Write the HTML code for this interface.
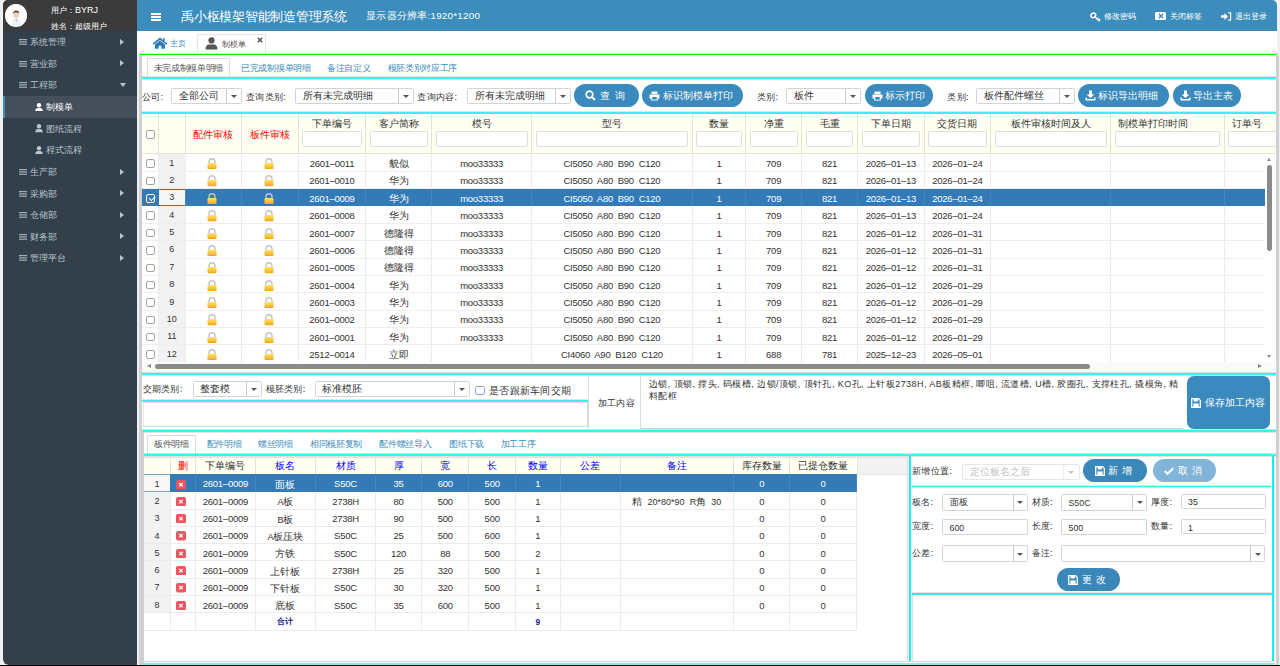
<!DOCTYPE html>
<html><head><meta charset="utf-8">
<style>
*{box-sizing:border-box}
html,body{margin:0;padding:0}
body{width:1280px;height:666px;overflow:hidden;position:relative;background:#f0f0f0;font-family:"Liberation Sans",sans-serif;color:#333}
.a{position:absolute}
#sb{left:2.5px;top:0;width:134px;height:665px;background:#333f4b;border-radius:5px 0 0 6px;overflow:hidden}
#user{left:0;top:0;width:134px;height:31px;background:#3b3b3b}
.av{left:2px;top:4.2px;width:22.4px;height:22.4px;border-radius:50%;background:#fff;overflow:hidden}
.ut{color:#fff;font-size:8px;left:48.5px;white-space:nowrap}
.mi{left:0;width:134px;height:21.6px;color:#b8c7ce;font-size:9.1px;line-height:21.6px;white-space:nowrap}
.mi .ic{position:absolute;left:16.8px;top:8px}
.mi .tx{position:absolute;left:27.5px;top:1px}
.mi .ar{position:absolute;left:117.5px;top:7.6px;width:0;height:0;border-left:4px solid #b8c7ce;border-top:3.5px solid transparent;border-bottom:3.5px solid transparent}
.mi .ad{position:absolute;left:117px;top:9px;width:0;height:0;border-top:4px solid #b8c7ce;border-left:3.5px solid transparent;border-right:3.5px solid transparent}
.sub .tx{left:43px}
.sub .pi{position:absolute;left:32.5px;top:6.6px}
#hd{left:137px;top:0;width:1140px;height:31px;background:#3c8dbc;border-radius:0 5px 0 0}
#tabs{left:137px;top:31px;width:1140px;height:23px;background:#fff}
#main{left:139.5px;top:53px;width:1138px;height:612px;background:#fff}
.hl{top:11px;font-size:8px;color:#fff;white-space:nowrap}

.lb{position:absolute;font-size:9.2px;letter-spacing:0.3px;color:#333;white-space:nowrap}
.sel{position:absolute;border:1px solid #d4d4d4;border-radius:1.5px;background:#fff;font-size:9.6px;color:#333;white-space:nowrap;overflow:hidden}
.sel .t{position:absolute;left:7px;top:50%;transform:translateY(-50%)}
.sel .dv{position:absolute;top:0;bottom:0;border-left:1px solid #ccc}
.sel .cr{position:absolute;top:50%;margin-top:-1px;width:0;height:0;border-top:3.5px solid #555;border-left:3.5px solid transparent;border-right:3.5px solid transparent}
.btn{position:absolute;background:#3a8abd;border-radius:12px;color:#fff;font-size:9.8px;white-space:nowrap}
.btn .t{position:absolute;top:50%;margin-top:0.8px;transform:translateY(-50%)}
.btn svg{position:absolute}
.cy{position:absolute;background:#3cf0f0;box-shadow:0 -0.8px 0 #e2dada,0 0.8px 0 #e2dada}
.st{position:absolute;top:7px;font-size:9px;letter-spacing:-0.3px;color:#3c8dbc;white-space:nowrap}

.th{text-align:center;font-size:10.2px;color:#333;white-space:nowrap}
.td{text-align:center;font-size:10.2px;color:#333;white-space:nowrap}
.td.tdw{color:#fff}
.rn{text-align:center;font-size:9px;color:#333}
.cb{width:9px;height:8.5px;border:1px solid #a8a29a;border-radius:2px;background:#fff}
.cb.ck{border-color:#fff;background:transparent}
.cb.ck::after{content:"";position:absolute;left:1.5px;top:0.5px;width:4.5px;height:2.5px;border-left:1.3px solid #fff;border-bottom:1.3px solid #fff;transform:rotate(-45deg)}
.mono{font-family:"Liberation Mono",monospace}
</style></head><body>
<div class="a" style="left:0;top:665px;width:1280px;height:1px;background:#000"></div>

<div id="sb" class="a">
  <div id="user" class="a">
    <div class="a av"><svg width="22.4" height="22.4" viewBox="0 0 22 22"><path d="M6.5 21 C6.5 15.5 8.5 14.5 11 14.5 C13.5 14.5 15.5 15.5 15.5 21Z" fill="#eef2f4"/><path d="M10.2 15 L11 18 L11.8 15Z" fill="#6fb6d6"/><ellipse cx="11" cy="10.6" rx="2.9" ry="3.4" fill="#f3d2b6"/><path d="M8 9.8 C7.8 7 9.2 6.3 11 6.3 C12.8 6.3 14.2 7 14 9.8 C13.4 8.6 12.4 8.3 11 8.4 C9.6 8.3 8.6 8.6 8 9.8Z" fill="#6b4a32"/></svg></div>
    <div class="a ut" style="top:5px">用户：<span style="font-size:9px">BYRJ</span></div>
    <div class="a ut" style="top:20.5px">姓名：超级用户</div>
  </div>
  <div class="a mi" style="top:31px"><svg class="ic" width="8" height="6" viewBox="0 0 8 6"><rect x="0" y="0" width="8" height="1.2" fill="#a3b0b8"/><rect x="0" y="2.3" width="8" height="1.2" fill="#a3b0b8"/><rect x="0" y="4.6" width="8" height="1.2" fill="#a3b0b8"/></svg><span class="tx">系统管理</span><span class="ar"></span></div>
  <div class="a mi" style="top:52.6px"><svg class="ic" width="8" height="6" viewBox="0 0 8 6"><rect x="0" y="0" width="8" height="1.2" fill="#a3b0b8"/><rect x="0" y="2.3" width="8" height="1.2" fill="#a3b0b8"/><rect x="0" y="4.6" width="8" height="1.2" fill="#a3b0b8"/></svg><span class="tx">营业部</span><span class="ar"></span></div>
  <div class="a mi" style="top:74.2px"><svg class="ic" width="8" height="6" viewBox="0 0 8 6"><rect x="0" y="0" width="8" height="1.2" fill="#a3b0b8"/><rect x="0" y="2.3" width="8" height="1.2" fill="#a3b0b8"/><rect x="0" y="4.6" width="8" height="1.2" fill="#a3b0b8"/></svg><span class="tx">工程部</span><span class="ad"></span></div>
  <div class="a mi sub" style="top:96.3px;height:22px;background:#444f5b;color:#fff;border-left:2.5px solid #3c8dbc"><svg class="pi" style="left:30.5px" width="8" height="8.5" viewBox="0 0 8 8.5"><circle cx="4" cy="2.3" r="2.2" fill="#fff"/><path d="M0.2 8.3 C0.2 5.6 1.6 4.9 2.8 4.9 H5.2 C6.4 4.9 7.8 5.6 7.8 8.3Z" fill="#fff"/></svg><span class="tx" style="left:41px">制模单</span></div>
  <div class="a mi sub" style="top:117.8px"><svg class="pi" width="8" height="8.5" viewBox="0 0 8 8.5"><circle cx="4" cy="2.3" r="2.2" fill="#b8c7ce"/><path d="M0.2 8.3 C0.2 5.6 1.6 4.9 2.8 4.9 H5.2 C6.4 4.9 7.8 5.6 7.8 8.3Z" fill="#b8c7ce"/></svg><span class="tx">图纸流程</span></div>
  <div class="a mi sub" style="top:139.4px"><svg class="pi" width="8" height="8.5" viewBox="0 0 8 8.5"><circle cx="4" cy="2.3" r="2.2" fill="#b8c7ce"/><path d="M0.2 8.3 C0.2 5.6 1.6 4.9 2.8 4.9 H5.2 C6.4 4.9 7.8 5.6 7.8 8.3Z" fill="#b8c7ce"/></svg><span class="tx">程式流程</span></div>
  <div class="a mi" style="top:161px"><svg class="ic" width="8" height="6" viewBox="0 0 8 6"><rect x="0" y="0" width="8" height="1.2" fill="#a3b0b8"/><rect x="0" y="2.3" width="8" height="1.2" fill="#a3b0b8"/><rect x="0" y="4.6" width="8" height="1.2" fill="#a3b0b8"/></svg><span class="tx">生产部</span><span class="ar"></span></div>
  <div class="a mi" style="top:182.6px"><svg class="ic" width="8" height="6" viewBox="0 0 8 6"><rect x="0" y="0" width="8" height="1.2" fill="#a3b0b8"/><rect x="0" y="2.3" width="8" height="1.2" fill="#a3b0b8"/><rect x="0" y="4.6" width="8" height="1.2" fill="#a3b0b8"/></svg><span class="tx">采购部</span><span class="ar"></span></div>
  <div class="a mi" style="top:204.2px"><svg class="ic" width="8" height="6" viewBox="0 0 8 6"><rect x="0" y="0" width="8" height="1.2" fill="#a3b0b8"/><rect x="0" y="2.3" width="8" height="1.2" fill="#a3b0b8"/><rect x="0" y="4.6" width="8" height="1.2" fill="#a3b0b8"/></svg><span class="tx">仓储部</span><span class="ar"></span></div>
  <div class="a mi" style="top:225.8px"><svg class="ic" width="8" height="6" viewBox="0 0 8 6"><rect x="0" y="0" width="8" height="1.2" fill="#a3b0b8"/><rect x="0" y="2.3" width="8" height="1.2" fill="#a3b0b8"/><rect x="0" y="4.6" width="8" height="1.2" fill="#a3b0b8"/></svg><span class="tx">财务部</span><span class="ar"></span></div>
  <div class="a mi" style="top:247.4px"><svg class="ic" width="8" height="6" viewBox="0 0 8 6"><rect x="0" y="0" width="8" height="1.2" fill="#a3b0b8"/><rect x="0" y="2.3" width="8" height="1.2" fill="#a3b0b8"/><rect x="0" y="4.6" width="8" height="1.2" fill="#a3b0b8"/></svg><span class="tx">管理平台</span><span class="ar"></span></div>
</div>

<div id="hd" class="a">
  <div class="a" style="left:13.5px;top:13px;width:10px;height:1.6px;background:#fff;box-shadow:0 3px 0 #fff,0 6px 0 #fff"></div>
  <div class="a" style="left:44px;top:8.5px;font-size:12.5px;color:#fff;white-space:nowrap;letter-spacing:-0.25px">禹小枢模架智能制造管理系统</div>
  <div class="a" style="left:229px;top:10px;font-size:9.8px;color:#fff;white-space:nowrap;letter-spacing:0.25px">显示器分辨率:1920*1200</div>
  <svg class="a" style="left:952.5px;top:11.6px" width="11" height="10" viewBox="0 0 11 10"><ellipse cx="3.2" cy="3.3" rx="2.5" ry="2.1" transform="rotate(-35 3.2 3.3)" fill="none" stroke="#fff" stroke-width="1.5"/><path d="M4.9 4.9 L9.6 9.2" stroke="#fff" stroke-width="1.4"/><path d="M7.2 7.1 L8.6 5.6 M8.7 8.5 L10.3 6.9" stroke="#fff" stroke-width="1.1"/></svg>
  <div class="a hl" style="left:966.5px">修改密码</div>
  <div class="a" style="left:1018px;top:11.7px;width:11px;height:8.8px;background:#fff;border-radius:1.5px"><svg class="a" style="left:2.6px;top:1.6px" width="6" height="6" viewBox="0 0 6 6"><path d="M0.8 0.8L5.2 5.2M5.2 0.8L0.8 5.2" stroke="#3c8dbc" stroke-width="1.4"/></svg></div>
  <div class="a hl" style="left:1032.5px">关闭标签</div>
  <svg class="a" style="left:1084px;top:11.5px" width="11" height="9" viewBox="0 0 11 9"><path d="M0 3.3H3.5V1L7 4.5 3.5 8V5.7H0Z" fill="#fff"/><path d="M7.2 0.8H9.6V8.2H7.2" stroke="#fff" stroke-width="1.2" fill="none"/></svg>
  <div class="a hl" style="left:1097.5px">退出登录</div>
</div>
<div id="tabs" class="a">
  <svg class="a" style="left:15px;top:6px" width="16" height="12" viewBox="0 0 16 12"><path d="M8 0.6 L0.6 6.6 L1.8 7.8 L8 2.8 L14.2 7.8 L15.4 6.6 L12.6 4.4 V1.2 H11 V3.1 Z" fill="#2f79b9"/><path d="M3 7.4 L8 3.6 L13 7.4 V11.8 H9.4 V8.8 H6.6 V11.8 H3 Z" fill="#2f79b9"/></svg>
  <div class="a" style="left:33px;top:7.3px;font-size:8px;color:#3c8dbc;white-space:nowrap">主页</div>
  <div class="a" style="left:60px;top:3px;width:69px;height:21px;border:1px solid #e6e6e6;border-bottom:none;background:#fff"></div>
  <svg class="a" style="left:68px;top:6px" width="13" height="13" viewBox="0 0 13 13"><circle cx="6.5" cy="3.4" r="3.1" fill="#555"/><path d="M0.5 12.6 C0.5 8.4 2.6 7.4 4.4 7.4 H8.6 C10.4 7.4 12.5 8.4 12.5 12.6 Z" fill="#555"/></svg>
  <div class="a" style="left:85px;top:7.8px;font-size:8.3px;color:#555;white-space:nowrap">制模单</div>
  <svg class="a" style="left:120px;top:6px" width="6" height="6" viewBox="0 0 6 6"><path d="M0.8 0.8L5.2 5.2M5.2 0.8L0.8 5.2" stroke="#555" stroke-width="1.5"/></svg>
</div>
<div id="main" class="a">
  <div class="a" style="left:0;top:0;width:1137px;height:1px;background:#ddd"></div>
  <div class="a" style="left:-1px;top:0;width:3px;height:612px;background:#d0d0d0"></div>
  <div class="a" style="left:0.8px;top:0.9px;width:1137px;height:1.5px;background:#08f508"></div>
  <div class="a" style="left:1136px;top:0;width:2px;height:612px;background:#d0d0d0"></div>
  <!-- subtabs: main origin x=139.5,y=53 -->
  <div class="a" style="left:7px;top:5px;width:83.5px;height:20px;border:1px solid #ddd;border-bottom:none;background:#fff"></div>
  <div class="st" style="left:14px;top:8.5px;color:#555">未完成制模单明细</div>
  <div class="st" style="left:101.5px;top:8.5px">已完成制摸单明细</div>
  <div class="st" style="left:187.5px;top:8.5px">备注自定义</div>
  <div class="st" style="left:248px;top:8.5px">模胚类别对应工序</div>
  <div class="a" style="left:2px;top:23.5px;width:1135px;height:1px;background:#ddd"></div>
  <div class="cy" style="left:2px;top:24px;width:1134px;height:2.2px"></div>
  <!-- toolbar -->
  <div class="lb" style="left:2.5px;top:37.5px">公司:</div>
  <div class="sel" style="left:31.7px;top:35.2px;width:70.4px;height:16.3px"><span class="t" style="left:7px">全部公司</span><span class="dv" style="left:54px"></span><span class="cr" style="left:59px"></span></div>
  <div class="lb" style="left:106.5px;top:37.5px">查询类别:</div>
  <div class="sel" style="left:155.9px;top:35.2px;width:118.2px;height:16.3px"><span class="t">所有未完成明细</span><span class="dv" style="left:101.7px"></span><span class="cr" style="left:106.5px"></span></div>
  <div class="lb" style="left:277.8px;top:37.5px">查询内容:</div>
  <div class="sel" style="left:327.5px;top:35.2px;width:103.6px;height:16.3px"><span class="t">所有未完成明细</span><span class="dv" style="left:86.9px"></span><span class="cr" style="left:91.5px"></span></div>
  <div class="btn" style="left:434.8px;top:30.7px;width:64.4px;height:23.3px"><svg style="left:10.5px;top:6.4px" width="11" height="11" viewBox="0 0 11 11"><circle cx="4.5" cy="4.5" r="3.3" fill="none" stroke="#fff" stroke-width="1.7"/><path d="M7 7L10 10" stroke="#fff" stroke-width="2"/></svg><span class="t" style="left:25.5px;letter-spacing:5px">查询</span></div>
  <div class="btn" style="left:502.5px;top:30.7px;width:100.6px;height:23.3px"><svg style="left:7px;top:7px" width="11" height="10" viewBox="0 0 11 10"><path d="M2.5 0.5H8.5V3H2.5Z" fill="#fff"/><path d="M0.5 3.5H10.5V7.5H8.8V9.5H2.2V7.5H0.5Z" fill="#fff"/><rect x="3.2" y="6" width="4.6" height="2.6" fill="#3a8abd"/></svg><span class="t" style="left:21px">标识制模单打印</span></div>
  <div class="lb" style="left:617.3px;top:37.5px">类别:</div>
  <div class="sel" style="left:646.8px;top:35.2px;width:74.5px;height:16.3px"><span class="t">板件</span><span class="dv" style="left:57.7px"></span><span class="cr" style="left:62.5px"></span></div>
  <div class="btn" style="left:725px;top:30.7px;width:68.2px;height:23.3px"><svg style="left:7px;top:7px" width="11" height="10" viewBox="0 0 11 10"><path d="M2.5 0.5H8.5V3H2.5Z" fill="#fff"/><path d="M0.5 3.5H10.5V7.5H8.8V9.5H2.2V7.5H0.5Z" fill="#fff"/><rect x="3.2" y="6" width="4.6" height="2.6" fill="#3a8abd"/></svg><span class="t" style="left:20.5px">标示打印</span></div>
  <div class="lb" style="left:807.8px;top:37.5px">类别:</div>
  <div class="sel" style="left:836.9px;top:35.2px;width:98.3px;height:16.3px"><span class="t">板件配件螺丝</span><span class="dv" style="left:81.5px"></span><span class="cr" style="left:86.3px"></span></div>
  <div class="btn" style="left:938.4px;top:30.7px;width:91.4px;height:23.3px"><svg style="left:7px;top:6px" width="11" height="11" viewBox="0 0 11 11"><path d="M4 0.5H7V4.5H9.5L5.5 8L1.5 4.5H4Z" fill="#fff"/><path d="M0.5 7.5V10.5H10.5V7.5H9V9H2V7.5Z" fill="#fff"/></svg><span class="t" style="left:20.5px">标识导出明细</span></div>
  <div class="btn" style="left:1033px;top:30.7px;width:68.6px;height:23.3px"><svg style="left:7px;top:6px" width="11" height="11" viewBox="0 0 11 11"><path d="M4 0.5H7V4.5H9.5L5.5 8L1.5 4.5H4Z" fill="#fff"/><path d="M0.5 7.5V10.5H10.5V7.5H9V9H2V7.5Z" fill="#fff"/></svg><span class="t" style="left:20.5px">导出主表</span></div>
  <div class="a" style="left:2px;top:58.5px;width:1135px;height:1px;background:#ddd"></div>
  <div class="cy" style="left:2px;top:59px;width:1134px;height:2.2px"></div>
</div>
<svg width="0" height="0" style="position:absolute"><defs><linearGradient id="lg" x1="0" y1="0" x2="0" y2="1"><stop offset="0" stop-color="#ffe070"/><stop offset="0.5" stop-color="#fcc83a"/><stop offset="1" stop-color="#eda21a"/></linearGradient></defs></svg>
<div class="a" style="left:142.4px;top:114.2px;width:1133.1px;height:39.89999999999999px;background:#fffff2;border-bottom:1px solid #e2e2d8"></div>
<div class="a" style="left:158.8px;top:154.10px;width:26.60px;height:17.35px;background:#f2f2f2"></div>
<div class="a" style="left:142.4px;top:170.95px;width:1122.20px;height:1px;background:#eeeeee"></div>
<div class="a" style="left:158.8px;top:171.45px;width:26.60px;height:17.35px;background:#f2f2f2"></div>
<div class="a" style="left:142.4px;top:188.30px;width:1122.20px;height:1px;background:#eeeeee"></div>
<div class="a" style="left:158.8px;top:206.15px;width:26.60px;height:17.35px;background:#f2f2f2"></div>
<div class="a" style="left:142.4px;top:223.00px;width:1122.20px;height:1px;background:#eeeeee"></div>
<div class="a" style="left:158.8px;top:223.50px;width:26.60px;height:17.35px;background:#f2f2f2"></div>
<div class="a" style="left:142.4px;top:240.35px;width:1122.20px;height:1px;background:#eeeeee"></div>
<div class="a" style="left:158.8px;top:240.85px;width:26.60px;height:17.35px;background:#f2f2f2"></div>
<div class="a" style="left:142.4px;top:257.70px;width:1122.20px;height:1px;background:#eeeeee"></div>
<div class="a" style="left:158.8px;top:258.20px;width:26.60px;height:17.35px;background:#f2f2f2"></div>
<div class="a" style="left:142.4px;top:275.05px;width:1122.20px;height:1px;background:#eeeeee"></div>
<div class="a" style="left:158.8px;top:275.55px;width:26.60px;height:17.35px;background:#f2f2f2"></div>
<div class="a" style="left:142.4px;top:292.40px;width:1122.20px;height:1px;background:#eeeeee"></div>
<div class="a" style="left:158.8px;top:292.90px;width:26.60px;height:17.35px;background:#f2f2f2"></div>
<div class="a" style="left:142.4px;top:309.75px;width:1122.20px;height:1px;background:#eeeeee"></div>
<div class="a" style="left:158.8px;top:310.25px;width:26.60px;height:17.35px;background:#f2f2f2"></div>
<div class="a" style="left:142.4px;top:327.10px;width:1122.20px;height:1px;background:#eeeeee"></div>
<div class="a" style="left:158.8px;top:327.60px;width:26.60px;height:17.35px;background:#f2f2f2"></div>
<div class="a" style="left:142.4px;top:344.45px;width:1122.20px;height:1px;background:#eeeeee"></div>
<div class="a" style="left:158.8px;top:344.95px;width:26.60px;height:17.35px;background:#f2f2f2"></div>
<div class="a" style="left:142.4px;top:361.80px;width:1122.20px;height:1px;background:#eeeeee"></div>
<div class="a" style="left:157.80px;top:114.2px;width:1px;height:39.89999999999999px;background:#e4e4d8"></div>
<div class="a" style="left:157.80px;top:154.1px;width:1px;height:208.20px;background:#ececec"></div>
<div class="a" style="left:184.90px;top:114.2px;width:1px;height:39.89999999999999px;background:#e4e4d8"></div>
<div class="a" style="left:184.90px;top:154.1px;width:1px;height:208.20px;background:#ececec"></div>
<div class="a" style="left:241.10px;top:114.2px;width:1px;height:39.89999999999999px;background:#e4e4d8"></div>
<div class="a" style="left:241.10px;top:154.1px;width:1px;height:208.20px;background:#ececec"></div>
<div class="a" style="left:297.80px;top:114.2px;width:1px;height:39.89999999999999px;background:#e4e4d8"></div>
<div class="a" style="left:297.80px;top:154.1px;width:1px;height:208.20px;background:#ececec"></div>
<div class="a" style="left:365.10px;top:114.2px;width:1px;height:39.89999999999999px;background:#e4e4d8"></div>
<div class="a" style="left:365.10px;top:154.1px;width:1px;height:208.20px;background:#ececec"></div>
<div class="a" style="left:431.10px;top:114.2px;width:1px;height:39.89999999999999px;background:#e4e4d8"></div>
<div class="a" style="left:431.10px;top:154.1px;width:1px;height:208.20px;background:#ececec"></div>
<div class="a" style="left:531.10px;top:114.2px;width:1px;height:39.89999999999999px;background:#e4e4d8"></div>
<div class="a" style="left:531.10px;top:154.1px;width:1px;height:208.20px;background:#ececec"></div>
<div class="a" style="left:691.70px;top:114.2px;width:1px;height:39.89999999999999px;background:#e4e4d8"></div>
<div class="a" style="left:691.70px;top:154.1px;width:1px;height:208.20px;background:#ececec"></div>
<div class="a" style="left:745.20px;top:114.2px;width:1px;height:39.89999999999999px;background:#e4e4d8"></div>
<div class="a" style="left:745.20px;top:154.1px;width:1px;height:208.20px;background:#ececec"></div>
<div class="a" style="left:801.10px;top:114.2px;width:1px;height:39.89999999999999px;background:#e4e4d8"></div>
<div class="a" style="left:801.10px;top:154.1px;width:1px;height:208.20px;background:#ececec"></div>
<div class="a" style="left:857.00px;top:114.2px;width:1px;height:39.89999999999999px;background:#e4e4d8"></div>
<div class="a" style="left:857.00px;top:154.1px;width:1px;height:208.20px;background:#ececec"></div>
<div class="a" style="left:923.80px;top:114.2px;width:1px;height:39.89999999999999px;background:#e4e4d8"></div>
<div class="a" style="left:923.80px;top:154.1px;width:1px;height:208.20px;background:#ececec"></div>
<div class="a" style="left:990.10px;top:114.2px;width:1px;height:39.89999999999999px;background:#e4e4d8"></div>
<div class="a" style="left:990.10px;top:154.1px;width:1px;height:208.20px;background:#ececec"></div>
<div class="a" style="left:1110.30px;top:114.2px;width:1px;height:39.89999999999999px;background:#e4e4d8"></div>
<div class="a" style="left:1110.30px;top:154.1px;width:1px;height:208.20px;background:#ececec"></div>
<div class="a" style="left:1223.90px;top:114.2px;width:1px;height:39.89999999999999px;background:#e4e4d8"></div>
<div class="a" style="left:1223.90px;top:154.1px;width:1px;height:208.20px;background:#ececec"></div>
<div class="a" style="left:142.4px;top:188.80px;width:1122.20px;height:17.35px;background:#337ab7"></div>
<div class="a" style="left:158.8px;top:189.60px;width:26.60px;height:15.75px;background:#f6f6f6"></div>
<div class="a" style="left:184.90px;top:188.80px;width:1px;height:17.35px;background:#4586c0"></div>
<div class="a" style="left:241.10px;top:188.80px;width:1px;height:17.35px;background:#4586c0"></div>
<div class="a" style="left:297.80px;top:188.80px;width:1px;height:17.35px;background:#4586c0"></div>
<div class="a" style="left:365.10px;top:188.80px;width:1px;height:17.35px;background:#4586c0"></div>
<div class="a" style="left:431.10px;top:188.80px;width:1px;height:17.35px;background:#4586c0"></div>
<div class="a" style="left:531.10px;top:188.80px;width:1px;height:17.35px;background:#4586c0"></div>
<div class="a" style="left:691.70px;top:188.80px;width:1px;height:17.35px;background:#4586c0"></div>
<div class="a" style="left:745.20px;top:188.80px;width:1px;height:17.35px;background:#4586c0"></div>
<div class="a" style="left:801.10px;top:188.80px;width:1px;height:17.35px;background:#4586c0"></div>
<div class="a" style="left:857.00px;top:188.80px;width:1px;height:17.35px;background:#4586c0"></div>
<div class="a" style="left:923.80px;top:188.80px;width:1px;height:17.35px;background:#4586c0"></div>
<div class="a" style="left:990.10px;top:188.80px;width:1px;height:17.35px;background:#4586c0"></div>
<div class="a" style="left:1110.30px;top:188.80px;width:1px;height:17.35px;background:#4586c0"></div>
<div class="a" style="left:1223.90px;top:188.80px;width:1px;height:17.35px;background:#4586c0"></div>
<div class="a th" style="left:185.4px;width:56.2px;top:128px;color:#f00">配件审核</div>
<div class="a th" style="left:241.6px;width:56.7px;top:128px;color:#f00">板件审核</div>
<div class="a th" style="left:298.3px;width:67.3px;top:116.7px">下单编号</div>
<div class="a" style="left:302.3px;top:131.2px;width:59.3px;height:16.3px;border:1px solid #dedede;border-radius:1.5px;background:#fff"></div>
<div class="a th" style="left:365.6px;width:66.0px;top:116.7px">客户简称</div>
<div class="a" style="left:369.6px;top:131.2px;width:58.0px;height:16.3px;border:1px solid #dedede;border-radius:1.5px;background:#fff"></div>
<div class="a th" style="left:431.6px;width:100.0px;top:116.7px">模号</div>
<div class="a" style="left:435.6px;top:131.2px;width:92.0px;height:16.3px;border:1px solid #dedede;border-radius:1.5px;background:#fff"></div>
<div class="a th" style="left:531.6px;width:160.6px;top:116.7px">型号</div>
<div class="a" style="left:535.6px;top:131.2px;width:152.6px;height:16.3px;border:1px solid #dedede;border-radius:1.5px;background:#fff"></div>
<div class="a th" style="left:692.2px;width:53.5px;top:116.7px">数量</div>
<div class="a" style="left:696.2px;top:131.2px;width:45.5px;height:16.3px;border:1px solid #dedede;border-radius:1.5px;background:#fff"></div>
<div class="a th" style="left:745.7px;width:55.9px;top:116.7px">净重</div>
<div class="a" style="left:749.7px;top:131.2px;width:47.9px;height:16.3px;border:1px solid #dedede;border-radius:1.5px;background:#fff"></div>
<div class="a th" style="left:801.6px;width:55.9px;top:116.7px">毛重</div>
<div class="a" style="left:805.6px;top:131.2px;width:47.9px;height:16.3px;border:1px solid #dedede;border-radius:1.5px;background:#fff"></div>
<div class="a th" style="left:857.5px;width:66.8px;top:116.7px">下单日期</div>
<div class="a" style="left:861.5px;top:131.2px;width:58.8px;height:16.3px;border:1px solid #dedede;border-radius:1.5px;background:#fff"></div>
<div class="a th" style="left:924.3px;width:66.3px;top:116.7px">交货日期</div>
<div class="a" style="left:928.3px;top:131.2px;width:58.3px;height:16.3px;border:1px solid #dedede;border-radius:1.5px;background:#fff"></div>
<div class="a th" style="left:990.6px;width:120.2px;top:116.7px">板件审核时间及人</div>
<div class="a" style="left:994.6px;top:131.2px;width:112.2px;height:16.3px;border:1px solid #dedede;border-radius:1.5px;background:#fff"></div>
<div class="a th" style="left:1118px;top:116.7px;text-align:left">制模单打印时间</div>
<div class="a" style="left:1114.8px;top:131.2px;width:105.6px;height:16.3px;border:1px solid #dedede;border-radius:1.5px;background:#fff"></div>
<div class="a th" style="left:1232px;top:116.7px;text-align:left">订单号</div>
<div class="a" style="left:1228.4px;top:131.2px;width:60px;height:16.3px;border:1px solid #dedede;border-radius:1.5px;background:#fff"></div>
<div class="a cb" style="left:146.3px;top:130.3px"></div>
<div class="a cb" style="left:146.3px;top:159.40px"></div>
<div class="a rn" style="left:158.3px;width:27.1px;top:157.70px">1</div>
<svg class="a" style="left:207.30px;top:158.10px" width="10" height="11.4" viewBox="0 0 10 11.4"><path d="M2 5.2 V3.8 A3 3 0 0 1 8 3.8 V5.2" fill="none" stroke="#c4c4c4" stroke-width="1.4"/><rect x="0.5" y="4.9" width="9" height="6.4" rx="1.4" fill="url(#lg)"/><rect x="0.9" y="7.6" width="8.2" height="0.5" fill="#f7c640" opacity="0.6"/></svg>
<svg class="a" style="left:263.75px;top:158.10px" width="10" height="11.4" viewBox="0 0 10 11.4"><path d="M2 5.2 V3.8 A3 3 0 0 1 8 3.8 V5.2" fill="none" stroke="#c4c4c4" stroke-width="1.4"/><rect x="0.5" y="4.9" width="9" height="6.4" rx="1.4" fill="url(#lg)"/><rect x="0.9" y="7.6" width="8.2" height="0.5" fill="#f7c640" opacity="0.6"/></svg>
<div class="a td" style="left:298.3px;width:67.3px;top:158.10px;font-size:9.5px;letter-spacing:-0.25px;word-spacing:2.4px">2601–0011</div>
<div class="a td" style="left:365.6px;width:66.0px;top:157.10px">貌似</div>
<div class="a td" style="left:431.6px;width:100.0px;top:158.10px;font-size:9.5px;letter-spacing:-0.25px;word-spacing:2.4px">moo33333</div>
<div class="a td" style="left:531.6px;width:160.6px;top:158.10px;font-size:9.5px;letter-spacing:-0.25px;word-spacing:2.4px">CI5050 A80 B90 C120</div>
<div class="a td" style="left:692.2px;width:53.5px;top:158.10px;font-size:9.5px;letter-spacing:-0.25px;word-spacing:2.4px">1</div>
<div class="a td" style="left:745.7px;width:55.9px;top:158.10px;font-size:9.5px;letter-spacing:-0.25px;word-spacing:2.4px">709</div>
<div class="a td" style="left:801.6px;width:55.9px;top:158.10px;font-size:9.5px;letter-spacing:-0.25px;word-spacing:2.4px">821</div>
<div class="a td" style="left:857.5px;width:66.8px;top:158.10px;font-size:9.5px;letter-spacing:-0.25px;word-spacing:2.4px">2026–01–13</div>
<div class="a td" style="left:924.3px;width:66.3px;top:158.10px;font-size:9.5px;letter-spacing:-0.25px;word-spacing:2.4px">2026–01–24</div>
<div class="a cb" style="left:146.3px;top:176.75px"></div>
<div class="a rn" style="left:158.3px;width:27.1px;top:175.05px">2</div>
<svg class="a" style="left:207.30px;top:175.45px" width="10" height="11.4" viewBox="0 0 10 11.4"><path d="M2 5.2 V3.8 A3 3 0 0 1 8 3.8 V5.2" fill="none" stroke="#c4c4c4" stroke-width="1.4"/><rect x="0.5" y="4.9" width="9" height="6.4" rx="1.4" fill="url(#lg)"/><rect x="0.9" y="7.6" width="8.2" height="0.5" fill="#f7c640" opacity="0.6"/></svg>
<svg class="a" style="left:263.75px;top:175.45px" width="10" height="11.4" viewBox="0 0 10 11.4"><path d="M2 5.2 V3.8 A3 3 0 0 1 8 3.8 V5.2" fill="none" stroke="#c4c4c4" stroke-width="1.4"/><rect x="0.5" y="4.9" width="9" height="6.4" rx="1.4" fill="url(#lg)"/><rect x="0.9" y="7.6" width="8.2" height="0.5" fill="#f7c640" opacity="0.6"/></svg>
<div class="a td" style="left:298.3px;width:67.3px;top:175.45px;font-size:9.5px;letter-spacing:-0.25px;word-spacing:2.4px">2601–0010</div>
<div class="a td" style="left:365.6px;width:66.0px;top:174.45px">华为</div>
<div class="a td" style="left:431.6px;width:100.0px;top:175.45px;font-size:9.5px;letter-spacing:-0.25px;word-spacing:2.4px">moo33333</div>
<div class="a td" style="left:531.6px;width:160.6px;top:175.45px;font-size:9.5px;letter-spacing:-0.25px;word-spacing:2.4px">CI5050 A80 B90 C120</div>
<div class="a td" style="left:692.2px;width:53.5px;top:175.45px;font-size:9.5px;letter-spacing:-0.25px;word-spacing:2.4px">1</div>
<div class="a td" style="left:745.7px;width:55.9px;top:175.45px;font-size:9.5px;letter-spacing:-0.25px;word-spacing:2.4px">709</div>
<div class="a td" style="left:801.6px;width:55.9px;top:175.45px;font-size:9.5px;letter-spacing:-0.25px;word-spacing:2.4px">821</div>
<div class="a td" style="left:857.5px;width:66.8px;top:175.45px;font-size:9.5px;letter-spacing:-0.25px;word-spacing:2.4px">2026–01–13</div>
<div class="a td" style="left:924.3px;width:66.3px;top:175.45px;font-size:9.5px;letter-spacing:-0.25px;word-spacing:2.4px">2026–01–24</div>
<div class="a cb ck" style="left:146.3px;top:194.10px"></div>
<div class="a rn" style="left:158.3px;width:27.1px;top:192.40px">3</div>
<svg class="a" style="left:207.30px;top:192.80px" width="10" height="11.4" viewBox="0 0 10 11.4"><path d="M2 5.2 V3.8 A3 3 0 0 1 8 3.8 V5.2" fill="none" stroke="#c4c4c4" stroke-width="1.4"/><rect x="0.5" y="4.9" width="9" height="6.4" rx="1.4" fill="url(#lg)"/><rect x="0.9" y="7.6" width="8.2" height="0.5" fill="#f7c640" opacity="0.6"/></svg>
<svg class="a" style="left:263.75px;top:192.80px" width="10" height="11.4" viewBox="0 0 10 11.4"><path d="M2 5.2 V3.8 A3 3 0 0 1 8 3.8 V5.2" fill="none" stroke="#c4c4c4" stroke-width="1.4"/><rect x="0.5" y="4.9" width="9" height="6.4" rx="1.4" fill="url(#lg)"/><rect x="0.9" y="7.6" width="8.2" height="0.5" fill="#f7c640" opacity="0.6"/></svg>
<div class="a td tdw" style="left:298.3px;width:67.3px;top:192.80px;font-size:9.5px;letter-spacing:-0.25px;word-spacing:2.4px">2601–0009</div>
<div class="a td tdw" style="left:365.6px;width:66.0px;top:191.80px">华为</div>
<div class="a td tdw" style="left:431.6px;width:100.0px;top:192.80px;font-size:9.5px;letter-spacing:-0.25px;word-spacing:2.4px">moo33333</div>
<div class="a td tdw" style="left:531.6px;width:160.6px;top:192.80px;font-size:9.5px;letter-spacing:-0.25px;word-spacing:2.4px">CI5050 A80 B90 C120</div>
<div class="a td tdw" style="left:692.2px;width:53.5px;top:192.80px;font-size:9.5px;letter-spacing:-0.25px;word-spacing:2.4px">1</div>
<div class="a td tdw" style="left:745.7px;width:55.9px;top:192.80px;font-size:9.5px;letter-spacing:-0.25px;word-spacing:2.4px">709</div>
<div class="a td tdw" style="left:801.6px;width:55.9px;top:192.80px;font-size:9.5px;letter-spacing:-0.25px;word-spacing:2.4px">821</div>
<div class="a td tdw" style="left:857.5px;width:66.8px;top:192.80px;font-size:9.5px;letter-spacing:-0.25px;word-spacing:2.4px">2026–01–13</div>
<div class="a td tdw" style="left:924.3px;width:66.3px;top:192.80px;font-size:9.5px;letter-spacing:-0.25px;word-spacing:2.4px">2026–01–24</div>
<div class="a cb" style="left:146.3px;top:211.45px"></div>
<div class="a rn" style="left:158.3px;width:27.1px;top:209.75px">4</div>
<svg class="a" style="left:207.30px;top:210.15px" width="10" height="11.4" viewBox="0 0 10 11.4"><path d="M2 5.2 V3.8 A3 3 0 0 1 8 3.8 V5.2" fill="none" stroke="#c4c4c4" stroke-width="1.4"/><rect x="0.5" y="4.9" width="9" height="6.4" rx="1.4" fill="url(#lg)"/><rect x="0.9" y="7.6" width="8.2" height="0.5" fill="#f7c640" opacity="0.6"/></svg>
<svg class="a" style="left:263.75px;top:210.15px" width="10" height="11.4" viewBox="0 0 10 11.4"><path d="M2 5.2 V3.8 A3 3 0 0 1 8 3.8 V5.2" fill="none" stroke="#c4c4c4" stroke-width="1.4"/><rect x="0.5" y="4.9" width="9" height="6.4" rx="1.4" fill="url(#lg)"/><rect x="0.9" y="7.6" width="8.2" height="0.5" fill="#f7c640" opacity="0.6"/></svg>
<div class="a td" style="left:298.3px;width:67.3px;top:210.15px;font-size:9.5px;letter-spacing:-0.25px;word-spacing:2.4px">2601–0008</div>
<div class="a td" style="left:365.6px;width:66.0px;top:209.15px">华为</div>
<div class="a td" style="left:431.6px;width:100.0px;top:210.15px;font-size:9.5px;letter-spacing:-0.25px;word-spacing:2.4px">moo33333</div>
<div class="a td" style="left:531.6px;width:160.6px;top:210.15px;font-size:9.5px;letter-spacing:-0.25px;word-spacing:2.4px">CI5050 A80 B90 C120</div>
<div class="a td" style="left:692.2px;width:53.5px;top:210.15px;font-size:9.5px;letter-spacing:-0.25px;word-spacing:2.4px">1</div>
<div class="a td" style="left:745.7px;width:55.9px;top:210.15px;font-size:9.5px;letter-spacing:-0.25px;word-spacing:2.4px">709</div>
<div class="a td" style="left:801.6px;width:55.9px;top:210.15px;font-size:9.5px;letter-spacing:-0.25px;word-spacing:2.4px">821</div>
<div class="a td" style="left:857.5px;width:66.8px;top:210.15px;font-size:9.5px;letter-spacing:-0.25px;word-spacing:2.4px">2026–01–13</div>
<div class="a td" style="left:924.3px;width:66.3px;top:210.15px;font-size:9.5px;letter-spacing:-0.25px;word-spacing:2.4px">2026–01–24</div>
<div class="a cb" style="left:146.3px;top:228.80px"></div>
<div class="a rn" style="left:158.3px;width:27.1px;top:227.10px">5</div>
<svg class="a" style="left:207.30px;top:227.50px" width="10" height="11.4" viewBox="0 0 10 11.4"><path d="M2 5.2 V3.8 A3 3 0 0 1 8 3.8 V5.2" fill="none" stroke="#c4c4c4" stroke-width="1.4"/><rect x="0.5" y="4.9" width="9" height="6.4" rx="1.4" fill="url(#lg)"/><rect x="0.9" y="7.6" width="8.2" height="0.5" fill="#f7c640" opacity="0.6"/></svg>
<svg class="a" style="left:263.75px;top:227.50px" width="10" height="11.4" viewBox="0 0 10 11.4"><path d="M2 5.2 V3.8 A3 3 0 0 1 8 3.8 V5.2" fill="none" stroke="#c4c4c4" stroke-width="1.4"/><rect x="0.5" y="4.9" width="9" height="6.4" rx="1.4" fill="url(#lg)"/><rect x="0.9" y="7.6" width="8.2" height="0.5" fill="#f7c640" opacity="0.6"/></svg>
<div class="a td" style="left:298.3px;width:67.3px;top:227.50px;font-size:9.5px;letter-spacing:-0.25px;word-spacing:2.4px">2601–0007</div>
<div class="a td" style="left:365.6px;width:66.0px;top:226.50px">德隆得</div>
<div class="a td" style="left:431.6px;width:100.0px;top:227.50px;font-size:9.5px;letter-spacing:-0.25px;word-spacing:2.4px">moo33333</div>
<div class="a td" style="left:531.6px;width:160.6px;top:227.50px;font-size:9.5px;letter-spacing:-0.25px;word-spacing:2.4px">CI5050 A80 B90 C120</div>
<div class="a td" style="left:692.2px;width:53.5px;top:227.50px;font-size:9.5px;letter-spacing:-0.25px;word-spacing:2.4px">1</div>
<div class="a td" style="left:745.7px;width:55.9px;top:227.50px;font-size:9.5px;letter-spacing:-0.25px;word-spacing:2.4px">709</div>
<div class="a td" style="left:801.6px;width:55.9px;top:227.50px;font-size:9.5px;letter-spacing:-0.25px;word-spacing:2.4px">821</div>
<div class="a td" style="left:857.5px;width:66.8px;top:227.50px;font-size:9.5px;letter-spacing:-0.25px;word-spacing:2.4px">2026–01–12</div>
<div class="a td" style="left:924.3px;width:66.3px;top:227.50px;font-size:9.5px;letter-spacing:-0.25px;word-spacing:2.4px">2026–01–31</div>
<div class="a cb" style="left:146.3px;top:246.15px"></div>
<div class="a rn" style="left:158.3px;width:27.1px;top:244.45px">6</div>
<svg class="a" style="left:207.30px;top:244.85px" width="10" height="11.4" viewBox="0 0 10 11.4"><path d="M2 5.2 V3.8 A3 3 0 0 1 8 3.8 V5.2" fill="none" stroke="#c4c4c4" stroke-width="1.4"/><rect x="0.5" y="4.9" width="9" height="6.4" rx="1.4" fill="url(#lg)"/><rect x="0.9" y="7.6" width="8.2" height="0.5" fill="#f7c640" opacity="0.6"/></svg>
<svg class="a" style="left:263.75px;top:244.85px" width="10" height="11.4" viewBox="0 0 10 11.4"><path d="M2 5.2 V3.8 A3 3 0 0 1 8 3.8 V5.2" fill="none" stroke="#c4c4c4" stroke-width="1.4"/><rect x="0.5" y="4.9" width="9" height="6.4" rx="1.4" fill="url(#lg)"/><rect x="0.9" y="7.6" width="8.2" height="0.5" fill="#f7c640" opacity="0.6"/></svg>
<div class="a td" style="left:298.3px;width:67.3px;top:244.85px;font-size:9.5px;letter-spacing:-0.25px;word-spacing:2.4px">2601–0006</div>
<div class="a td" style="left:365.6px;width:66.0px;top:243.85px">德隆得</div>
<div class="a td" style="left:431.6px;width:100.0px;top:244.85px;font-size:9.5px;letter-spacing:-0.25px;word-spacing:2.4px">moo33333</div>
<div class="a td" style="left:531.6px;width:160.6px;top:244.85px;font-size:9.5px;letter-spacing:-0.25px;word-spacing:2.4px">CI5050 A80 B90 C120</div>
<div class="a td" style="left:692.2px;width:53.5px;top:244.85px;font-size:9.5px;letter-spacing:-0.25px;word-spacing:2.4px">1</div>
<div class="a td" style="left:745.7px;width:55.9px;top:244.85px;font-size:9.5px;letter-spacing:-0.25px;word-spacing:2.4px">709</div>
<div class="a td" style="left:801.6px;width:55.9px;top:244.85px;font-size:9.5px;letter-spacing:-0.25px;word-spacing:2.4px">821</div>
<div class="a td" style="left:857.5px;width:66.8px;top:244.85px;font-size:9.5px;letter-spacing:-0.25px;word-spacing:2.4px">2026–01–12</div>
<div class="a td" style="left:924.3px;width:66.3px;top:244.85px;font-size:9.5px;letter-spacing:-0.25px;word-spacing:2.4px">2026–01–31</div>
<div class="a cb" style="left:146.3px;top:263.50px"></div>
<div class="a rn" style="left:158.3px;width:27.1px;top:261.80px">7</div>
<svg class="a" style="left:207.30px;top:262.20px" width="10" height="11.4" viewBox="0 0 10 11.4"><path d="M2 5.2 V3.8 A3 3 0 0 1 8 3.8 V5.2" fill="none" stroke="#c4c4c4" stroke-width="1.4"/><rect x="0.5" y="4.9" width="9" height="6.4" rx="1.4" fill="url(#lg)"/><rect x="0.9" y="7.6" width="8.2" height="0.5" fill="#f7c640" opacity="0.6"/></svg>
<svg class="a" style="left:263.75px;top:262.20px" width="10" height="11.4" viewBox="0 0 10 11.4"><path d="M2 5.2 V3.8 A3 3 0 0 1 8 3.8 V5.2" fill="none" stroke="#c4c4c4" stroke-width="1.4"/><rect x="0.5" y="4.9" width="9" height="6.4" rx="1.4" fill="url(#lg)"/><rect x="0.9" y="7.6" width="8.2" height="0.5" fill="#f7c640" opacity="0.6"/></svg>
<div class="a td" style="left:298.3px;width:67.3px;top:262.20px;font-size:9.5px;letter-spacing:-0.25px;word-spacing:2.4px">2601–0005</div>
<div class="a td" style="left:365.6px;width:66.0px;top:261.20px">德隆得</div>
<div class="a td" style="left:431.6px;width:100.0px;top:262.20px;font-size:9.5px;letter-spacing:-0.25px;word-spacing:2.4px">moo33333</div>
<div class="a td" style="left:531.6px;width:160.6px;top:262.20px;font-size:9.5px;letter-spacing:-0.25px;word-spacing:2.4px">CI5050 A80 B90 C120</div>
<div class="a td" style="left:692.2px;width:53.5px;top:262.20px;font-size:9.5px;letter-spacing:-0.25px;word-spacing:2.4px">1</div>
<div class="a td" style="left:745.7px;width:55.9px;top:262.20px;font-size:9.5px;letter-spacing:-0.25px;word-spacing:2.4px">709</div>
<div class="a td" style="left:801.6px;width:55.9px;top:262.20px;font-size:9.5px;letter-spacing:-0.25px;word-spacing:2.4px">821</div>
<div class="a td" style="left:857.5px;width:66.8px;top:262.20px;font-size:9.5px;letter-spacing:-0.25px;word-spacing:2.4px">2026–01–12</div>
<div class="a td" style="left:924.3px;width:66.3px;top:262.20px;font-size:9.5px;letter-spacing:-0.25px;word-spacing:2.4px">2026–01–31</div>
<div class="a cb" style="left:146.3px;top:280.85px"></div>
<div class="a rn" style="left:158.3px;width:27.1px;top:279.15px">8</div>
<svg class="a" style="left:207.30px;top:279.55px" width="10" height="11.4" viewBox="0 0 10 11.4"><path d="M2 5.2 V3.8 A3 3 0 0 1 8 3.8 V5.2" fill="none" stroke="#c4c4c4" stroke-width="1.4"/><rect x="0.5" y="4.9" width="9" height="6.4" rx="1.4" fill="url(#lg)"/><rect x="0.9" y="7.6" width="8.2" height="0.5" fill="#f7c640" opacity="0.6"/></svg>
<svg class="a" style="left:263.75px;top:279.55px" width="10" height="11.4" viewBox="0 0 10 11.4"><path d="M2 5.2 V3.8 A3 3 0 0 1 8 3.8 V5.2" fill="none" stroke="#c4c4c4" stroke-width="1.4"/><rect x="0.5" y="4.9" width="9" height="6.4" rx="1.4" fill="url(#lg)"/><rect x="0.9" y="7.6" width="8.2" height="0.5" fill="#f7c640" opacity="0.6"/></svg>
<div class="a td" style="left:298.3px;width:67.3px;top:279.55px;font-size:9.5px;letter-spacing:-0.25px;word-spacing:2.4px">2601–0004</div>
<div class="a td" style="left:365.6px;width:66.0px;top:278.55px">华为</div>
<div class="a td" style="left:431.6px;width:100.0px;top:279.55px;font-size:9.5px;letter-spacing:-0.25px;word-spacing:2.4px">moo33333</div>
<div class="a td" style="left:531.6px;width:160.6px;top:279.55px;font-size:9.5px;letter-spacing:-0.25px;word-spacing:2.4px">CI5050 A80 B90 C120</div>
<div class="a td" style="left:692.2px;width:53.5px;top:279.55px;font-size:9.5px;letter-spacing:-0.25px;word-spacing:2.4px">1</div>
<div class="a td" style="left:745.7px;width:55.9px;top:279.55px;font-size:9.5px;letter-spacing:-0.25px;word-spacing:2.4px">709</div>
<div class="a td" style="left:801.6px;width:55.9px;top:279.55px;font-size:9.5px;letter-spacing:-0.25px;word-spacing:2.4px">821</div>
<div class="a td" style="left:857.5px;width:66.8px;top:279.55px;font-size:9.5px;letter-spacing:-0.25px;word-spacing:2.4px">2026–01–12</div>
<div class="a td" style="left:924.3px;width:66.3px;top:279.55px;font-size:9.5px;letter-spacing:-0.25px;word-spacing:2.4px">2026–01–29</div>
<div class="a cb" style="left:146.3px;top:298.20px"></div>
<div class="a rn" style="left:158.3px;width:27.1px;top:296.50px">9</div>
<svg class="a" style="left:207.30px;top:296.90px" width="10" height="11.4" viewBox="0 0 10 11.4"><path d="M2 5.2 V3.8 A3 3 0 0 1 8 3.8 V5.2" fill="none" stroke="#c4c4c4" stroke-width="1.4"/><rect x="0.5" y="4.9" width="9" height="6.4" rx="1.4" fill="url(#lg)"/><rect x="0.9" y="7.6" width="8.2" height="0.5" fill="#f7c640" opacity="0.6"/></svg>
<svg class="a" style="left:263.75px;top:296.90px" width="10" height="11.4" viewBox="0 0 10 11.4"><path d="M2 5.2 V3.8 A3 3 0 0 1 8 3.8 V5.2" fill="none" stroke="#c4c4c4" stroke-width="1.4"/><rect x="0.5" y="4.9" width="9" height="6.4" rx="1.4" fill="url(#lg)"/><rect x="0.9" y="7.6" width="8.2" height="0.5" fill="#f7c640" opacity="0.6"/></svg>
<div class="a td" style="left:298.3px;width:67.3px;top:296.90px;font-size:9.5px;letter-spacing:-0.25px;word-spacing:2.4px">2601–0003</div>
<div class="a td" style="left:365.6px;width:66.0px;top:295.90px">华为</div>
<div class="a td" style="left:431.6px;width:100.0px;top:296.90px;font-size:9.5px;letter-spacing:-0.25px;word-spacing:2.4px">moo33333</div>
<div class="a td" style="left:531.6px;width:160.6px;top:296.90px;font-size:9.5px;letter-spacing:-0.25px;word-spacing:2.4px">CI5050 A80 B90 C120</div>
<div class="a td" style="left:692.2px;width:53.5px;top:296.90px;font-size:9.5px;letter-spacing:-0.25px;word-spacing:2.4px">1</div>
<div class="a td" style="left:745.7px;width:55.9px;top:296.90px;font-size:9.5px;letter-spacing:-0.25px;word-spacing:2.4px">709</div>
<div class="a td" style="left:801.6px;width:55.9px;top:296.90px;font-size:9.5px;letter-spacing:-0.25px;word-spacing:2.4px">821</div>
<div class="a td" style="left:857.5px;width:66.8px;top:296.90px;font-size:9.5px;letter-spacing:-0.25px;word-spacing:2.4px">2026–01–12</div>
<div class="a td" style="left:924.3px;width:66.3px;top:296.90px;font-size:9.5px;letter-spacing:-0.25px;word-spacing:2.4px">2026–01–29</div>
<div class="a cb" style="left:146.3px;top:315.55px"></div>
<div class="a rn" style="left:158.3px;width:27.1px;top:313.85px">10</div>
<svg class="a" style="left:207.30px;top:314.25px" width="10" height="11.4" viewBox="0 0 10 11.4"><path d="M2 5.2 V3.8 A3 3 0 0 1 8 3.8 V5.2" fill="none" stroke="#c4c4c4" stroke-width="1.4"/><rect x="0.5" y="4.9" width="9" height="6.4" rx="1.4" fill="url(#lg)"/><rect x="0.9" y="7.6" width="8.2" height="0.5" fill="#f7c640" opacity="0.6"/></svg>
<svg class="a" style="left:263.75px;top:314.25px" width="10" height="11.4" viewBox="0 0 10 11.4"><path d="M2 5.2 V3.8 A3 3 0 0 1 8 3.8 V5.2" fill="none" stroke="#c4c4c4" stroke-width="1.4"/><rect x="0.5" y="4.9" width="9" height="6.4" rx="1.4" fill="url(#lg)"/><rect x="0.9" y="7.6" width="8.2" height="0.5" fill="#f7c640" opacity="0.6"/></svg>
<div class="a td" style="left:298.3px;width:67.3px;top:314.25px;font-size:9.5px;letter-spacing:-0.25px;word-spacing:2.4px">2601–0002</div>
<div class="a td" style="left:365.6px;width:66.0px;top:313.25px">华为</div>
<div class="a td" style="left:431.6px;width:100.0px;top:314.25px;font-size:9.5px;letter-spacing:-0.25px;word-spacing:2.4px">moo33333</div>
<div class="a td" style="left:531.6px;width:160.6px;top:314.25px;font-size:9.5px;letter-spacing:-0.25px;word-spacing:2.4px">CI5050 A80 B90 C120</div>
<div class="a td" style="left:692.2px;width:53.5px;top:314.25px;font-size:9.5px;letter-spacing:-0.25px;word-spacing:2.4px">1</div>
<div class="a td" style="left:745.7px;width:55.9px;top:314.25px;font-size:9.5px;letter-spacing:-0.25px;word-spacing:2.4px">709</div>
<div class="a td" style="left:801.6px;width:55.9px;top:314.25px;font-size:9.5px;letter-spacing:-0.25px;word-spacing:2.4px">821</div>
<div class="a td" style="left:857.5px;width:66.8px;top:314.25px;font-size:9.5px;letter-spacing:-0.25px;word-spacing:2.4px">2026–01–12</div>
<div class="a td" style="left:924.3px;width:66.3px;top:314.25px;font-size:9.5px;letter-spacing:-0.25px;word-spacing:2.4px">2026–01–29</div>
<div class="a cb" style="left:146.3px;top:332.90px"></div>
<div class="a rn" style="left:158.3px;width:27.1px;top:331.20px">11</div>
<svg class="a" style="left:207.30px;top:331.60px" width="10" height="11.4" viewBox="0 0 10 11.4"><path d="M2 5.2 V3.8 A3 3 0 0 1 8 3.8 V5.2" fill="none" stroke="#c4c4c4" stroke-width="1.4"/><rect x="0.5" y="4.9" width="9" height="6.4" rx="1.4" fill="url(#lg)"/><rect x="0.9" y="7.6" width="8.2" height="0.5" fill="#f7c640" opacity="0.6"/></svg>
<svg class="a" style="left:263.75px;top:331.60px" width="10" height="11.4" viewBox="0 0 10 11.4"><path d="M2 5.2 V3.8 A3 3 0 0 1 8 3.8 V5.2" fill="none" stroke="#c4c4c4" stroke-width="1.4"/><rect x="0.5" y="4.9" width="9" height="6.4" rx="1.4" fill="url(#lg)"/><rect x="0.9" y="7.6" width="8.2" height="0.5" fill="#f7c640" opacity="0.6"/></svg>
<div class="a td" style="left:298.3px;width:67.3px;top:331.60px;font-size:9.5px;letter-spacing:-0.25px;word-spacing:2.4px">2601–0001</div>
<div class="a td" style="left:365.6px;width:66.0px;top:330.60px">华为</div>
<div class="a td" style="left:431.6px;width:100.0px;top:331.60px;font-size:9.5px;letter-spacing:-0.25px;word-spacing:2.4px">moo33333</div>
<div class="a td" style="left:531.6px;width:160.6px;top:331.60px;font-size:9.5px;letter-spacing:-0.25px;word-spacing:2.4px">CI5050 A80 B90 C120</div>
<div class="a td" style="left:692.2px;width:53.5px;top:331.60px;font-size:9.5px;letter-spacing:-0.25px;word-spacing:2.4px">1</div>
<div class="a td" style="left:745.7px;width:55.9px;top:331.60px;font-size:9.5px;letter-spacing:-0.25px;word-spacing:2.4px">709</div>
<div class="a td" style="left:801.6px;width:55.9px;top:331.60px;font-size:9.5px;letter-spacing:-0.25px;word-spacing:2.4px">821</div>
<div class="a td" style="left:857.5px;width:66.8px;top:331.60px;font-size:9.5px;letter-spacing:-0.25px;word-spacing:2.4px">2026–01–12</div>
<div class="a td" style="left:924.3px;width:66.3px;top:331.60px;font-size:9.5px;letter-spacing:-0.25px;word-spacing:2.4px">2026–01–29</div>
<div class="a cb" style="left:146.3px;top:350.25px"></div>
<div class="a rn" style="left:158.3px;width:27.1px;top:348.55px">12</div>
<svg class="a" style="left:207.30px;top:348.95px" width="10" height="11.4" viewBox="0 0 10 11.4"><path d="M2 5.2 V3.8 A3 3 0 0 1 8 3.8 V5.2" fill="none" stroke="#c4c4c4" stroke-width="1.4"/><rect x="0.5" y="4.9" width="9" height="6.4" rx="1.4" fill="url(#lg)"/><rect x="0.9" y="7.6" width="8.2" height="0.5" fill="#f7c640" opacity="0.6"/></svg>
<svg class="a" style="left:263.75px;top:348.95px" width="10" height="11.4" viewBox="0 0 10 11.4"><path d="M2 5.2 V3.8 A3 3 0 0 1 8 3.8 V5.2" fill="none" stroke="#c4c4c4" stroke-width="1.4"/><rect x="0.5" y="4.9" width="9" height="6.4" rx="1.4" fill="url(#lg)"/><rect x="0.9" y="7.6" width="8.2" height="0.5" fill="#f7c640" opacity="0.6"/></svg>
<div class="a td" style="left:298.3px;width:67.3px;top:348.95px;font-size:9.5px;letter-spacing:-0.25px;word-spacing:2.4px">2512–0014</div>
<div class="a td" style="left:365.6px;width:66.0px;top:347.95px">立即</div>
<div class="a td" style="left:531.6px;width:160.6px;top:348.95px;font-size:9.5px;letter-spacing:-0.25px;word-spacing:2.4px">CI4060 A90 B120 C120</div>
<div class="a td" style="left:692.2px;width:53.5px;top:348.95px;font-size:9.5px;letter-spacing:-0.25px;word-spacing:2.4px">1</div>
<div class="a td" style="left:745.7px;width:55.9px;top:348.95px;font-size:9.5px;letter-spacing:-0.25px;word-spacing:2.4px">688</div>
<div class="a td" style="left:801.6px;width:55.9px;top:348.95px;font-size:9.5px;letter-spacing:-0.25px;word-spacing:2.4px">781</div>
<div class="a td" style="left:857.5px;width:66.8px;top:348.95px;font-size:9.5px;letter-spacing:-0.25px;word-spacing:2.4px">2025–12–23</div>
<div class="a td" style="left:924.3px;width:66.3px;top:348.95px;font-size:9.5px;letter-spacing:-0.25px;word-spacing:2.4px">2026–05–01</div>
<div class="a" style="left:142.4px;top:362px;width:1133px;height:10.5px;background:#fafafa"></div>
<div class="a" style="left:154.8px;top:364px;width:935.6px;height:5.4px;border-radius:3px;background:#8a8a8a"></div>
<div class="a" style="left:147px;top:364.2px;width:0;height:0;border-right:4px solid #888;border-top:2.6px solid transparent;border-bottom:2.6px solid transparent"></div>
<div class="a" style="left:1257.5px;top:364.2px;width:0;height:0;border-left:4px solid #888;border-top:2.6px solid transparent;border-bottom:2.6px solid transparent"></div>
<div class="a" style="left:1265px;top:154px;width:10.5px;height:208px;background:#fff"></div>
<div class="a" style="left:1266.6px;top:164.9px;width:5.8px;height:85.8px;border-radius:3px;background:#8a8a8a"></div>
<div class="a" style="left:1267.3px;top:158px;width:0;height:0;border-bottom:3.5px solid #888;border-left:2.6px solid transparent;border-right:2.6px solid transparent"></div>
<div class="a" style="left:1267.3px;top:355px;width:0;height:0;border-top:3.5px solid #888;border-left:2.6px solid transparent;border-right:2.6px solid transparent"></div>
<div class="a" style="left:141.5px;top:372px;width:1134px;height:1px;background:#e8dede"></div>
<div class="cy" style="left:141.5px;top:372.8px;width:1134px;height:2.4px"></div>
<div class="lb" style="left:142.5px;top:383.2px">交期类别:</div>
<div class="sel" style="left:193px;top:381.2px;width:68.8px;height:15.6px"><span class="t" style="left:6px">整套模</span><span class="dv" style="left:51.6px"></span><span class="cr" style="left:56.5px"></span></div>
<div class="lb" style="left:265.5px;top:383.2px">模胚类别:</div>
<div class="sel" style="left:315px;top:381.2px;width:155.1px;height:15.6px"><span class="t" style="left:6px">标准模胚</span><span class="dv" style="left:138.1px"></span><span class="cr" style="left:143px"></span></div>
<div class="a" style="left:474.9px;top:386.3px;width:9.8px;height:9.1px;border:1px solid #8fa6f5;border-radius:2px;background:#fff"></div>
<div class="lb" style="left:489px;top:383.6px;font-size:9.9px">是否跟新车间交期</div>
<div class="cy" style="left:141.5px;top:400.1px;width:446px;height:2.2px"></div>
<div class="a" style="left:142.5px;top:402.3px;width:445.5px;height:25px;border-right:1.2px solid #d8d8d8;border-bottom:1.2px solid #d8d8d8;border-left:1px solid #e4e4e4"></div>
<div class="a" style="left:588.2px;top:375.2px;width:53px;height:54.3px;border-left:1.2px solid #ddd;border-right:1.2px solid #ddd"></div>
<div class="lb" style="left:597.8px;top:398.2px;font-size:8.5px">加工内容</div>
<div class="a" style="left:641px;top:375.2px;width:542px;height:53.6px;border-top:1px solid #ddd;border-bottom:1.2px solid #cfcfcf"></div>
<div class="a" style="left:648.8px;top:377.8px;width:560px;font-size:9px;line-height:12px;color:#333;white-space:nowrap;letter-spacing:0.43px">边锁, 顶锁, 撑头, 码模槽, 边锁/顶锁, 顶针孔, KO孔, 上针板2738H, AB板精框, 唧咀, 流道槽, U槽, 胶圈孔, 支撑柱孔, 撬模角, 精<br>料配框</div>
<div class="btn" style="left:1186.5px;top:375.6px;width:83.7px;height:53.4px;border-radius:7px;font-weight:normal"><svg style="left:4.5px;top:22px" width="10" height="10" viewBox="0 0 10 10"><path d="M0.7 0.7H7.6L9.3 2.4V9.3H0.7Z" fill="none" stroke="#fff" stroke-width="1.3"/><rect x="2.6" y="0.7" width="4.2" height="2.8" fill="#fff"/><rect x="2.4" y="5.4" width="5.2" height="3.9" fill="#fff"/></svg><span class="t" style="left:18.3px;font-size:9.8px">保存加工内容</span></div>
<div class="a" style="left:141.5px;top:429.2px;width:1134px;height:1px;background:#e0e0e0"></div>
<div class="cy" style="left:141.5px;top:430px;width:1134px;height:2.2px"></div>
<div class="a" style="left:146.7px;top:435px;width:49px;height:19px;border:1px solid #ddd;border-bottom:none;background:#fff"></div>
<div class="st" style="left:154px;top:438.5px;font-size:8.6px;color:#555">板件明细</div>
<div class="st" style="left:206.5px;top:438.5px;font-size:8.6px">配件明细</div>
<div class="st" style="left:258px;top:438.5px;font-size:8.6px">螺丝明细</div>
<div class="st" style="left:309.9px;top:438.5px;font-size:8.6px">相同模胚复制</div>
<div class="st" style="left:379.4px;top:438.5px;font-size:8.6px">配件螺丝导入</div>
<div class="st" style="left:449.3px;top:438.5px;font-size:8.6px">图纸下载</div>
<div class="st" style="left:500.8px;top:438.5px;font-size:8.6px">加工工序</div>
<div class="a" style="left:141.5px;top:453px;width:1134px;height:1px;background:#e0e0e0"></div>
<div class="cy" style="left:141.5px;top:453.8px;width:1134px;height:1.8px"></div>
<div class="a" style="left:140px;top:432px;width:3.6px;height:233px;background:#d0d0d0"></div>
<div class="a" style="left:143.6px;top:455.6px;width:763.5px;height:2.1px;background:#e2e2e2"></div>
<div class="a" style="left:143.6px;top:457.7px;width:712.9px;height:16.7px;background:#fffff2"></div>
<div class="a" style="left:856.5px;top:457.7px;width:50.3px;height:16.7px;background:#f2f2f2;border-left:1px solid #e4e4e4"></div>
<div class="a" style="left:143.6px;top:473.9px;width:763.2px;height:1px;background:#e8e8e0"></div>
<div class="a" style="left:143.6px;top:491.70px;width:26.70px;height:17.3px;background:#f2f2f2"></div>
<div class="a" style="left:143.6px;top:508.50px;width:712.90px;height:1px;background:#ececec"></div>
<div class="a" style="left:143.6px;top:509.00px;width:26.70px;height:17.3px;background:#f2f2f2"></div>
<div class="a" style="left:143.6px;top:525.80px;width:712.90px;height:1px;background:#ececec"></div>
<div class="a" style="left:143.6px;top:526.30px;width:26.70px;height:17.3px;background:#f2f2f2"></div>
<div class="a" style="left:143.6px;top:543.10px;width:712.90px;height:1px;background:#ececec"></div>
<div class="a" style="left:143.6px;top:543.60px;width:26.70px;height:17.3px;background:#f2f2f2"></div>
<div class="a" style="left:143.6px;top:560.40px;width:712.90px;height:1px;background:#ececec"></div>
<div class="a" style="left:143.6px;top:560.90px;width:26.70px;height:17.3px;background:#f2f2f2"></div>
<div class="a" style="left:143.6px;top:577.70px;width:712.90px;height:1px;background:#ececec"></div>
<div class="a" style="left:143.6px;top:578.20px;width:26.70px;height:17.3px;background:#f2f2f2"></div>
<div class="a" style="left:143.6px;top:595.00px;width:712.90px;height:1px;background:#ececec"></div>
<div class="a" style="left:143.6px;top:595.50px;width:26.70px;height:17.3px;background:#f2f2f2"></div>
<div class="a" style="left:143.6px;top:612.30px;width:712.90px;height:1px;background:#ececec"></div>
<div class="a" style="left:143.6px;top:629.60px;width:712.90px;height:1px;background:#ececec"></div>
<div class="a" style="left:169.80px;top:457.7px;width:1px;height:16.7px;background:#e4e4d8"></div>
<div class="a" style="left:169.80px;top:474.4px;width:1px;height:155.7px;background:#ececec"></div>
<div class="a" style="left:195.00px;top:457.7px;width:1px;height:16.7px;background:#e4e4d8"></div>
<div class="a" style="left:195.00px;top:474.4px;width:1px;height:155.7px;background:#ececec"></div>
<div class="a" style="left:254.80px;top:457.7px;width:1px;height:16.7px;background:#e4e4d8"></div>
<div class="a" style="left:254.80px;top:474.4px;width:1px;height:155.7px;background:#ececec"></div>
<div class="a" style="left:315.00px;top:457.7px;width:1px;height:16.7px;background:#e4e4d8"></div>
<div class="a" style="left:315.00px;top:474.4px;width:1px;height:155.7px;background:#ececec"></div>
<div class="a" style="left:375.00px;top:457.7px;width:1px;height:16.7px;background:#e4e4d8"></div>
<div class="a" style="left:375.00px;top:474.4px;width:1px;height:155.7px;background:#ececec"></div>
<div class="a" style="left:421.25px;top:457.7px;width:1px;height:16.7px;background:#e4e4d8"></div>
<div class="a" style="left:421.25px;top:474.4px;width:1px;height:155.7px;background:#ececec"></div>
<div class="a" style="left:468.25px;top:457.7px;width:1px;height:16.7px;background:#e4e4d8"></div>
<div class="a" style="left:468.25px;top:474.4px;width:1px;height:155.7px;background:#ececec"></div>
<div class="a" style="left:515.00px;top:457.7px;width:1px;height:16.7px;background:#e4e4d8"></div>
<div class="a" style="left:515.00px;top:474.4px;width:1px;height:155.7px;background:#ececec"></div>
<div class="a" style="left:559.50px;top:457.7px;width:1px;height:16.7px;background:#e4e4d8"></div>
<div class="a" style="left:559.50px;top:474.4px;width:1px;height:155.7px;background:#ececec"></div>
<div class="a" style="left:619.70px;top:457.7px;width:1px;height:16.7px;background:#e4e4d8"></div>
<div class="a" style="left:619.70px;top:474.4px;width:1px;height:155.7px;background:#ececec"></div>
<div class="a" style="left:733.10px;top:457.7px;width:1px;height:16.7px;background:#e4e4d8"></div>
<div class="a" style="left:733.10px;top:474.4px;width:1px;height:155.7px;background:#ececec"></div>
<div class="a" style="left:789.30px;top:457.7px;width:1px;height:16.7px;background:#e4e4d8"></div>
<div class="a" style="left:789.30px;top:474.4px;width:1px;height:155.7px;background:#ececec"></div>
<div class="a" style="left:856.00px;top:474.4px;width:1px;height:155.7px;background:#ececec"></div>
<div class="a" style="left:170.3px;top:474.40px;width:686.20px;height:17.3px;background:#337ab7"></div>
<div class="a" style="left:143.6px;top:474.40px;width:26.70px;height:17.3px;background:#f8f8f8;border-top:1px solid #7aa7d6;border-bottom:1px solid #7aa7d6"></div>
<div class="a" style="left:195.00px;top:474.40px;width:1px;height:17.3px;background:#4586c0"></div>
<div class="a" style="left:254.80px;top:474.40px;width:1px;height:17.3px;background:#4586c0"></div>
<div class="a" style="left:315.00px;top:474.40px;width:1px;height:17.3px;background:#4586c0"></div>
<div class="a" style="left:375.00px;top:474.40px;width:1px;height:17.3px;background:#4586c0"></div>
<div class="a" style="left:421.25px;top:474.40px;width:1px;height:17.3px;background:#4586c0"></div>
<div class="a" style="left:468.25px;top:474.40px;width:1px;height:17.3px;background:#4586c0"></div>
<div class="a" style="left:515.00px;top:474.40px;width:1px;height:17.3px;background:#4586c0"></div>
<div class="a" style="left:559.50px;top:474.40px;width:1px;height:17.3px;background:#4586c0"></div>
<div class="a" style="left:619.70px;top:474.40px;width:1px;height:17.3px;background:#4586c0"></div>
<div class="a" style="left:733.10px;top:474.40px;width:1px;height:17.3px;background:#4586c0"></div>
<div class="a" style="left:789.30px;top:474.40px;width:1px;height:17.3px;background:#4586c0"></div>
<div class="a" style="left:856.00px;top:474.40px;width:1px;height:17.3px;background:#4586c0"></div>
<div class="a th" style="left:170.3px;width:25.2px;top:460px;font-size:9.6px;color:#f00">删</div>
<div class="a th" style="left:195.5px;width:59.8px;top:460px;font-size:9.6px;color:#333">下单编号</div>
<div class="a th" style="left:255.3px;width:60.2px;top:460px;font-size:9.6px;color:#00f">板名</div>
<div class="a th" style="left:315.5px;width:60.0px;top:460px;font-size:9.6px;color:#00f">材质</div>
<div class="a th" style="left:375.5px;width:46.2px;top:460px;font-size:9.6px;color:#00f">厚</div>
<div class="a th" style="left:421.75px;width:47.0px;top:460px;font-size:9.6px;color:#00f">宽</div>
<div class="a th" style="left:468.75px;width:46.8px;top:460px;font-size:9.6px;color:#00f">长</div>
<div class="a th" style="left:515.5px;width:44.5px;top:460px;font-size:9.6px;color:#00f">数量</div>
<div class="a th" style="left:560px;width:60.2px;top:460px;font-size:9.6px;color:#00f">公差</div>
<div class="a th" style="left:620.2px;width:113.4px;top:460px;font-size:9.6px;color:#00f">备注</div>
<div class="a th" style="left:733.6px;width:56.2px;top:460px;font-size:9.6px;color:#333">库存数量</div>
<div class="a th" style="left:789.8px;width:66.7px;top:460px;font-size:9.6px;color:#333">已提仓数量</div>
<div class="a rn" style="left:143.6px;width:26.7px;top:478.60px;font-weight:normal">1</div>
<svg class="a" style="left:176.4px;top:479.50px" width="10" height="9.4" viewBox="0 0 10 9.4"><rect x="0" y="0" width="10" height="9.4" rx="2" fill="#ec5661"/><path d="M3.3 3L6.7 6.4M6.7 3L3.3 6.4" stroke="#fff" stroke-width="1.1"/></svg>
<div class="a td tdw" style="left:195.5px;width:59.8px;top:478.40px;font-size:9.5px;letter-spacing:-0.25px;word-spacing:2.4px">2601–0009</div>
<div class="a td tdw" style="left:255.3px;width:60.2px;top:478.00px;font-size:10px;white-space:pre;word-spacing:2.6px">面板</div>
<div class="a td tdw" style="left:315.5px;width:60.0px;top:478.40px;font-size:9.5px;letter-spacing:-0.25px;word-spacing:2.4px">S50C</div>
<div class="a td tdw" style="left:375.5px;width:46.2px;top:478.40px;font-size:9.5px;letter-spacing:-0.25px;word-spacing:2.4px">35</div>
<div class="a td tdw" style="left:421.75px;width:47.0px;top:478.40px;font-size:9.5px;letter-spacing:-0.25px;word-spacing:2.4px">600</div>
<div class="a td tdw" style="left:468.75px;width:46.8px;top:478.40px;font-size:9.5px;letter-spacing:-0.25px;word-spacing:2.4px">500</div>
<div class="a td tdw" style="left:515.5px;width:44.5px;top:478.40px;font-size:9.5px;letter-spacing:-0.25px;word-spacing:2.4px">1</div>
<div class="a td tdw" style="left:733.6px;width:56.2px;top:478.40px;font-size:9.5px;letter-spacing:-0.25px;word-spacing:2.4px">0</div>
<div class="a td tdw" style="left:789.8px;width:66.7px;top:478.40px;font-size:9.5px;letter-spacing:-0.25px;word-spacing:2.4px">0</div>
<div class="a rn" style="left:143.6px;width:26.7px;top:495.90px;font-weight:normal">2</div>
<svg class="a" style="left:176.4px;top:496.80px" width="10" height="9.4" viewBox="0 0 10 9.4"><rect x="0" y="0" width="10" height="9.4" rx="2" fill="#ec5661"/><path d="M3.3 3L6.7 6.4M6.7 3L3.3 6.4" stroke="#fff" stroke-width="1.1"/></svg>
<div class="a td" style="left:195.5px;width:59.8px;top:495.70px;font-size:9.5px;letter-spacing:-0.25px;word-spacing:2.4px">2601–0009</div>
<div class="a td" style="left:255.3px;width:60.2px;top:495.30px;font-size:10px;white-space:pre;word-spacing:2.6px"><span style="font-size:9px">A</span>板</div>
<div class="a td" style="left:315.5px;width:60.0px;top:495.70px;font-size:9.5px;letter-spacing:-0.25px;word-spacing:2.4px">2738H</div>
<div class="a td" style="left:375.5px;width:46.2px;top:495.70px;font-size:9.5px;letter-spacing:-0.25px;word-spacing:2.4px">80</div>
<div class="a td" style="left:421.75px;width:47.0px;top:495.70px;font-size:9.5px;letter-spacing:-0.25px;word-spacing:2.4px">500</div>
<div class="a td" style="left:468.75px;width:46.8px;top:495.70px;font-size:9.5px;letter-spacing:-0.25px;word-spacing:2.4px">500</div>
<div class="a td" style="left:515.5px;width:44.5px;top:495.70px;font-size:9.5px;letter-spacing:-0.25px;word-spacing:2.4px">1</div>
<div class="a td" style="left:620.2px;width:113.4px;top:495.30px;font-size:10px;white-space:pre;word-spacing:2.6px">精<span style="font-size:9px"> 20*80*90 R</span>角<span style="font-size:9px"> 30</span></div>
<div class="a td" style="left:733.6px;width:56.2px;top:495.70px;font-size:9.5px;letter-spacing:-0.25px;word-spacing:2.4px">0</div>
<div class="a td" style="left:789.8px;width:66.7px;top:495.70px;font-size:9.5px;letter-spacing:-0.25px;word-spacing:2.4px">0</div>
<div class="a rn" style="left:143.6px;width:26.7px;top:513.20px;font-weight:normal">3</div>
<svg class="a" style="left:176.4px;top:514.10px" width="10" height="9.4" viewBox="0 0 10 9.4"><rect x="0" y="0" width="10" height="9.4" rx="2" fill="#ec5661"/><path d="M3.3 3L6.7 6.4M6.7 3L3.3 6.4" stroke="#fff" stroke-width="1.1"/></svg>
<div class="a td" style="left:195.5px;width:59.8px;top:513.00px;font-size:9.5px;letter-spacing:-0.25px;word-spacing:2.4px">2601–0009</div>
<div class="a td" style="left:255.3px;width:60.2px;top:512.60px;font-size:10px;white-space:pre;word-spacing:2.6px"><span style="font-size:9px">B</span>板</div>
<div class="a td" style="left:315.5px;width:60.0px;top:513.00px;font-size:9.5px;letter-spacing:-0.25px;word-spacing:2.4px">2738H</div>
<div class="a td" style="left:375.5px;width:46.2px;top:513.00px;font-size:9.5px;letter-spacing:-0.25px;word-spacing:2.4px">90</div>
<div class="a td" style="left:421.75px;width:47.0px;top:513.00px;font-size:9.5px;letter-spacing:-0.25px;word-spacing:2.4px">500</div>
<div class="a td" style="left:468.75px;width:46.8px;top:513.00px;font-size:9.5px;letter-spacing:-0.25px;word-spacing:2.4px">500</div>
<div class="a td" style="left:515.5px;width:44.5px;top:513.00px;font-size:9.5px;letter-spacing:-0.25px;word-spacing:2.4px">1</div>
<div class="a td" style="left:733.6px;width:56.2px;top:513.00px;font-size:9.5px;letter-spacing:-0.25px;word-spacing:2.4px">0</div>
<div class="a td" style="left:789.8px;width:66.7px;top:513.00px;font-size:9.5px;letter-spacing:-0.25px;word-spacing:2.4px">0</div>
<div class="a rn" style="left:143.6px;width:26.7px;top:530.50px;font-weight:normal">4</div>
<svg class="a" style="left:176.4px;top:531.40px" width="10" height="9.4" viewBox="0 0 10 9.4"><rect x="0" y="0" width="10" height="9.4" rx="2" fill="#ec5661"/><path d="M3.3 3L6.7 6.4M6.7 3L3.3 6.4" stroke="#fff" stroke-width="1.1"/></svg>
<div class="a td" style="left:195.5px;width:59.8px;top:530.30px;font-size:9.5px;letter-spacing:-0.25px;word-spacing:2.4px">2601–0009</div>
<div class="a td" style="left:255.3px;width:60.2px;top:529.90px;font-size:10px;white-space:pre;word-spacing:2.6px"><span style="font-size:9px">A</span>板压块</div>
<div class="a td" style="left:315.5px;width:60.0px;top:530.30px;font-size:9.5px;letter-spacing:-0.25px;word-spacing:2.4px">S50C</div>
<div class="a td" style="left:375.5px;width:46.2px;top:530.30px;font-size:9.5px;letter-spacing:-0.25px;word-spacing:2.4px">25</div>
<div class="a td" style="left:421.75px;width:47.0px;top:530.30px;font-size:9.5px;letter-spacing:-0.25px;word-spacing:2.4px">500</div>
<div class="a td" style="left:468.75px;width:46.8px;top:530.30px;font-size:9.5px;letter-spacing:-0.25px;word-spacing:2.4px">600</div>
<div class="a td" style="left:515.5px;width:44.5px;top:530.30px;font-size:9.5px;letter-spacing:-0.25px;word-spacing:2.4px">1</div>
<div class="a td" style="left:733.6px;width:56.2px;top:530.30px;font-size:9.5px;letter-spacing:-0.25px;word-spacing:2.4px">0</div>
<div class="a td" style="left:789.8px;width:66.7px;top:530.30px;font-size:9.5px;letter-spacing:-0.25px;word-spacing:2.4px">0</div>
<div class="a rn" style="left:143.6px;width:26.7px;top:547.80px;font-weight:normal">5</div>
<svg class="a" style="left:176.4px;top:548.70px" width="10" height="9.4" viewBox="0 0 10 9.4"><rect x="0" y="0" width="10" height="9.4" rx="2" fill="#ec5661"/><path d="M3.3 3L6.7 6.4M6.7 3L3.3 6.4" stroke="#fff" stroke-width="1.1"/></svg>
<div class="a td" style="left:195.5px;width:59.8px;top:547.60px;font-size:9.5px;letter-spacing:-0.25px;word-spacing:2.4px">2601–0009</div>
<div class="a td" style="left:255.3px;width:60.2px;top:547.20px;font-size:10px;white-space:pre;word-spacing:2.6px">方铁</div>
<div class="a td" style="left:315.5px;width:60.0px;top:547.60px;font-size:9.5px;letter-spacing:-0.25px;word-spacing:2.4px">S50C</div>
<div class="a td" style="left:375.5px;width:46.2px;top:547.60px;font-size:9.5px;letter-spacing:-0.25px;word-spacing:2.4px">120</div>
<div class="a td" style="left:421.75px;width:47.0px;top:547.60px;font-size:9.5px;letter-spacing:-0.25px;word-spacing:2.4px">88</div>
<div class="a td" style="left:468.75px;width:46.8px;top:547.60px;font-size:9.5px;letter-spacing:-0.25px;word-spacing:2.4px">500</div>
<div class="a td" style="left:515.5px;width:44.5px;top:547.60px;font-size:9.5px;letter-spacing:-0.25px;word-spacing:2.4px">2</div>
<div class="a td" style="left:733.6px;width:56.2px;top:547.60px;font-size:9.5px;letter-spacing:-0.25px;word-spacing:2.4px">0</div>
<div class="a td" style="left:789.8px;width:66.7px;top:547.60px;font-size:9.5px;letter-spacing:-0.25px;word-spacing:2.4px">0</div>
<div class="a rn" style="left:143.6px;width:26.7px;top:565.10px;font-weight:normal">6</div>
<svg class="a" style="left:176.4px;top:566.00px" width="10" height="9.4" viewBox="0 0 10 9.4"><rect x="0" y="0" width="10" height="9.4" rx="2" fill="#ec5661"/><path d="M3.3 3L6.7 6.4M6.7 3L3.3 6.4" stroke="#fff" stroke-width="1.1"/></svg>
<div class="a td" style="left:195.5px;width:59.8px;top:564.90px;font-size:9.5px;letter-spacing:-0.25px;word-spacing:2.4px">2601–0009</div>
<div class="a td" style="left:255.3px;width:60.2px;top:564.50px;font-size:10px;white-space:pre;word-spacing:2.6px">上针板</div>
<div class="a td" style="left:315.5px;width:60.0px;top:564.90px;font-size:9.5px;letter-spacing:-0.25px;word-spacing:2.4px">2738H</div>
<div class="a td" style="left:375.5px;width:46.2px;top:564.90px;font-size:9.5px;letter-spacing:-0.25px;word-spacing:2.4px">25</div>
<div class="a td" style="left:421.75px;width:47.0px;top:564.90px;font-size:9.5px;letter-spacing:-0.25px;word-spacing:2.4px">320</div>
<div class="a td" style="left:468.75px;width:46.8px;top:564.90px;font-size:9.5px;letter-spacing:-0.25px;word-spacing:2.4px">500</div>
<div class="a td" style="left:515.5px;width:44.5px;top:564.90px;font-size:9.5px;letter-spacing:-0.25px;word-spacing:2.4px">1</div>
<div class="a td" style="left:733.6px;width:56.2px;top:564.90px;font-size:9.5px;letter-spacing:-0.25px;word-spacing:2.4px">0</div>
<div class="a td" style="left:789.8px;width:66.7px;top:564.90px;font-size:9.5px;letter-spacing:-0.25px;word-spacing:2.4px">0</div>
<div class="a rn" style="left:143.6px;width:26.7px;top:582.40px;font-weight:normal">7</div>
<svg class="a" style="left:176.4px;top:583.30px" width="10" height="9.4" viewBox="0 0 10 9.4"><rect x="0" y="0" width="10" height="9.4" rx="2" fill="#ec5661"/><path d="M3.3 3L6.7 6.4M6.7 3L3.3 6.4" stroke="#fff" stroke-width="1.1"/></svg>
<div class="a td" style="left:195.5px;width:59.8px;top:582.20px;font-size:9.5px;letter-spacing:-0.25px;word-spacing:2.4px">2601–0009</div>
<div class="a td" style="left:255.3px;width:60.2px;top:581.80px;font-size:10px;white-space:pre;word-spacing:2.6px">下针板</div>
<div class="a td" style="left:315.5px;width:60.0px;top:582.20px;font-size:9.5px;letter-spacing:-0.25px;word-spacing:2.4px">S50C</div>
<div class="a td" style="left:375.5px;width:46.2px;top:582.20px;font-size:9.5px;letter-spacing:-0.25px;word-spacing:2.4px">30</div>
<div class="a td" style="left:421.75px;width:47.0px;top:582.20px;font-size:9.5px;letter-spacing:-0.25px;word-spacing:2.4px">320</div>
<div class="a td" style="left:468.75px;width:46.8px;top:582.20px;font-size:9.5px;letter-spacing:-0.25px;word-spacing:2.4px">500</div>
<div class="a td" style="left:515.5px;width:44.5px;top:582.20px;font-size:9.5px;letter-spacing:-0.25px;word-spacing:2.4px">1</div>
<div class="a td" style="left:733.6px;width:56.2px;top:582.20px;font-size:9.5px;letter-spacing:-0.25px;word-spacing:2.4px">0</div>
<div class="a td" style="left:789.8px;width:66.7px;top:582.20px;font-size:9.5px;letter-spacing:-0.25px;word-spacing:2.4px">0</div>
<div class="a rn" style="left:143.6px;width:26.7px;top:599.70px;font-weight:normal">8</div>
<svg class="a" style="left:176.4px;top:600.60px" width="10" height="9.4" viewBox="0 0 10 9.4"><rect x="0" y="0" width="10" height="9.4" rx="2" fill="#ec5661"/><path d="M3.3 3L6.7 6.4M6.7 3L3.3 6.4" stroke="#fff" stroke-width="1.1"/></svg>
<div class="a td" style="left:195.5px;width:59.8px;top:599.50px;font-size:9.5px;letter-spacing:-0.25px;word-spacing:2.4px">2601–0009</div>
<div class="a td" style="left:255.3px;width:60.2px;top:599.10px;font-size:10px;white-space:pre;word-spacing:2.6px">底板</div>
<div class="a td" style="left:315.5px;width:60.0px;top:599.50px;font-size:9.5px;letter-spacing:-0.25px;word-spacing:2.4px">S50C</div>
<div class="a td" style="left:375.5px;width:46.2px;top:599.50px;font-size:9.5px;letter-spacing:-0.25px;word-spacing:2.4px">35</div>
<div class="a td" style="left:421.75px;width:47.0px;top:599.50px;font-size:9.5px;letter-spacing:-0.25px;word-spacing:2.4px">600</div>
<div class="a td" style="left:468.75px;width:46.8px;top:599.50px;font-size:9.5px;letter-spacing:-0.25px;word-spacing:2.4px">500</div>
<div class="a td" style="left:515.5px;width:44.5px;top:599.50px;font-size:9.5px;letter-spacing:-0.25px;word-spacing:2.4px">1</div>
<div class="a td" style="left:733.6px;width:56.2px;top:599.50px;font-size:9.5px;letter-spacing:-0.25px;word-spacing:2.4px">0</div>
<div class="a td" style="left:789.8px;width:66.7px;top:599.50px;font-size:9.5px;letter-spacing:-0.25px;word-spacing:2.4px">0</div>
<div class="a td" style="left:255.3px;width:60.2px;top:617.30px;font-size:7.6px;font-weight:bold;color:#1a1a8c">合计</div>
<div class="a td" style="left:515.5px;width:44.5px;top:617.00px;font-size:8.4px;font-weight:bold;color:#1a1a8c">9</div>
<div class="a" style="left:906.8px;top:455.6px;width:1.5px;height:206px;background:#dcdcdc"></div>
<div class="a" style="left:143.6px;top:660.8px;width:765px;height:1.2px;background:#dcdcdc"></div>
<div class="cy" style="left:908.9px;top:455px;width:2.1px;height:205.8px;background:#14f0f0"></div>
<div class="cy" style="left:1272px;top:455px;width:2.2px;height:205.8px;background:#14f0f0"></div>
<div class="a" style="left:911.5px;top:595px;width:1.3px;height:66px;background:#dedede"></div>
<div class="lb" style="left:912px;top:465.0px;font-size:9.4px">新增位置:</div>
<div class="sel" style="left:962.3px;top:463.7px;width:117.3px;height:16px;border-color:#e6e6e6;color:#c0c0c0"><span class="t" style="left:6.5px">定位板名之后</span><span class="dv" style="left:100.2px;border-color:#eee"></span><span class="cr" style="left:105px;border-top-color:#c8c8c8"></span></div>
<div class="btn" style="left:1083.2px;top:459px;width:63.5px;height:23.3px;background:#3a87b9"><svg style="left:11.5px;top:6.7px" width="10" height="10" viewBox="0 0 10 10"><path d="M0.7 0.7H7.6L9.3 2.4V9.3H0.7Z" fill="none" stroke="#fff" stroke-width="1.3"/><rect x="2.6" y="0.7" width="4.2" height="2.8" fill="#fff"/><rect x="2.4" y="5.4" width="5.2" height="3.9" fill="#fff"/></svg><span class="t" style="left:25px;letter-spacing:4px">新增</span></div>
<div class="btn" style="left:1153.3px;top:459px;width:62.9px;height:23.3px;background:#80b4d8"><svg style="left:11px;top:7.5px" width="10" height="8" viewBox="0 0 10 8"><path d="M0.8 4L3.6 6.8L9.2 1.2" fill="none" stroke="#fff" stroke-width="2"/></svg><span class="t" style="left:24.5px;letter-spacing:4px">取消</span></div>
<div class="cy" style="left:912px;top:485.6px;width:1359px;height:1.9px;width:359px"></div>
<div class="lb" style="left:912px;top:496.0px;font-size:9.4px">板名:</div>
<div class="sel" style="left:942px;top:494.2px;width:85.6px;height:16.4px;font-size:9.4px"><span class="t" style="left:6.5px">面板</span><span class="dv" style="left:69.5px"></span><span class="cr" style="left:74.3px"></span></div>
<div class="lb" style="left:1031.5px;top:496.0px;font-size:9.4px">材质:</div>
<div class="sel" style="left:1061px;top:494.2px;width:86px;height:16.4px;font-size:9.4px"><span class="t" style="left:6.5px"><span style="font-size:8.8px">S50C</span></span><span class="dv" style="left:69.9px"></span><span class="cr" style="left:74.7px"></span></div>
<div class="lb" style="left:1151px;top:496.0px;font-size:9.4px">厚度:</div>
<div class="sel" style="left:1180.6px;top:493.5px;width:85.9px;height:15.8px;font-size:9.4px"><span class="t" style="left:6.5px"><span style="font-size:8.8px">35</span></span></div>
<div class="lb" style="left:912px;top:520.0px;font-size:9.4px">宽度:</div>
<div class="sel" style="left:942px;top:518.6px;width:85.6px;height:16px;font-size:9.4px"><span class="t" style="left:6.5px"><span style="font-size:8.8px">600</span></span></div>
<div class="lb" style="left:1031.5px;top:520.0px;font-size:9.4px">长度:</div>
<div class="sel" style="left:1061px;top:518.6px;width:86px;height:16px;font-size:9.4px"><span class="t" style="left:6.5px"><span style="font-size:8.8px">500</span></span></div>
<div class="lb" style="left:1151px;top:520.0px;font-size:9.4px">数量:</div>
<div class="sel" style="left:1180.6px;top:519.2px;width:85.9px;height:15.3px;font-size:9.4px"><span class="t" style="left:6.5px"><span style="font-size:8.8px">1</span></span></div>
<div class="lb" style="left:912px;top:546.5px;font-size:9.4px">公差:</div>
<div class="sel" style="left:942px;top:545.4px;width:85.6px;height:16.4px;font-size:9.4px"><span class="t" style="left:6.5px"></span><span class="dv" style="left:69.5px"></span><span class="cr" style="left:74.3px"></span></div>
<div class="lb" style="left:1031.5px;top:546.5px;font-size:9.4px">备注:</div>
<div class="sel" style="left:1061px;top:545.4px;width:204.2px;height:16.4px;font-size:9.4px"><span class="t" style="left:6.5px"></span><span class="dv" style="left:187.9px"></span><span class="cr" style="left:192.70000000000002px"></span></div>
<div class="btn" style="left:1056.5px;top:567.7px;width:63.2px;height:23.8px;background:#3a87b9"><svg style="left:11.5px;top:7px" width="10" height="10" viewBox="0 0 10 10"><path d="M0.7 0.7H7.6L9.3 2.4V9.3H0.7Z" fill="none" stroke="#fff" stroke-width="1.3"/><rect x="2.6" y="0.7" width="4.2" height="2.8" fill="#fff"/><rect x="2.4" y="5.4" width="5.2" height="3.9" fill="#fff"/></svg><span class="t" style="left:25px;letter-spacing:4px">更改</span></div>
<div class="cy" style="left:912px;top:593.3px;width:360px;height:1.9px;background:#33e8e8"></div>
<div class="a" style="left:912.8px;top:595.2px;width:359px;height:65.8px;background:#fff"></div>
<div class="a" style="left:141px;top:661px;width:1134px;height:1px;background:#dcdcdc"></div>
<div class="a" style="left:141px;top:663px;width:1134px;height:2px;background:#8ee6e6"></div>
<div class="a" style="left:1275.5px;top:56px;width:3px;height:609px;background:#d0d0d0"></div>
<div class="a" style="left:1278.5px;top:31px;width:1.5px;height:634px;background:#f0f0f0"></div>
</body></html>
